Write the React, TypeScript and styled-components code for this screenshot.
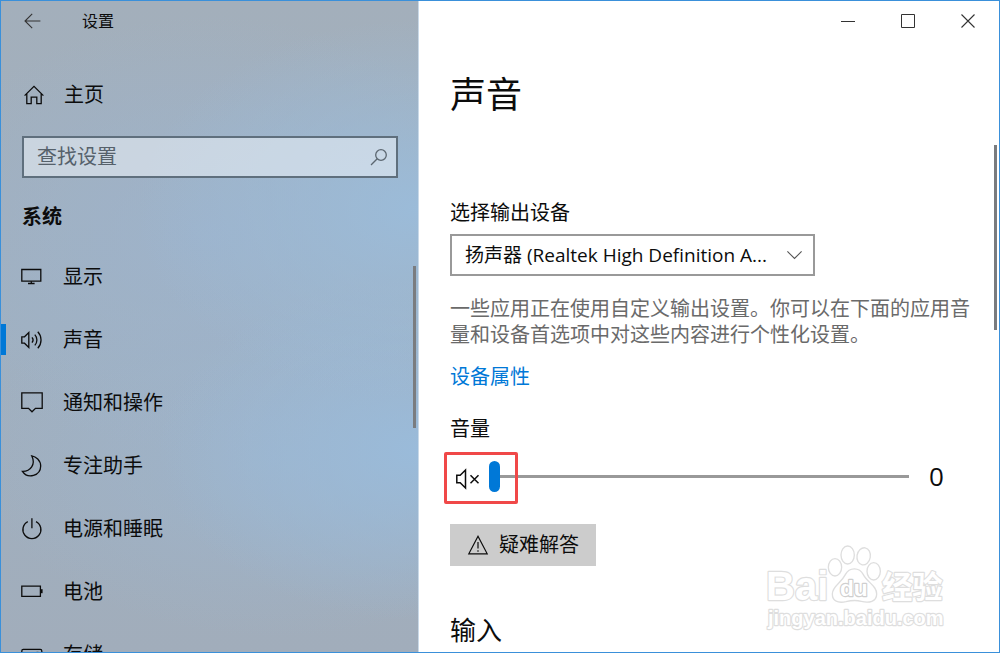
import React, { useState } from "react";
import styled, { createGlobalStyle } from "styled-components";

const GlobalStyle = createGlobalStyle`
  * { box-sizing: border-box; }
  body {
    margin: 0;
    color: #0c0c0c;
    font-family: "Open Sans", "Noto Sans CJK SC", sans-serif;
    font-size: 20px;
    line-height: 26px;
  }
  button, input, select { font: inherit; color: inherit; }
  h1, h2, p, ul { margin: 0; padding: 0; }
`;

const Window = styled.div`
  display: flex;
  height: 100vh;
  overflow: hidden;
  border: 1px solid #3a90da;
  background: #fff;
`;

const Sidebar = styled.aside`
  position: relative;
  flex: 0 0 418px;
  display: flex;
  flex-direction: column;
  overflow: hidden;
  border-right: 1px solid #c9d9e8;
  background:
    radial-gradient(ellipse 280px 190px at 100% 32%, rgba(155, 188, 218, 0.95), rgba(155, 188, 218, 0) 100%),
    radial-gradient(ellipse 260px 170px at 100% 69%, rgba(154, 187, 218, 1), rgba(154, 187, 218, 0) 100%),
    radial-gradient(ellipse 300px 220px at 50% 36%, rgba(157, 180, 206, 0.8), rgba(157, 180, 206, 0) 100%),
    radial-gradient(ellipse 300px 180px at 66% 70%, rgba(157, 181, 206, 0.8), rgba(157, 181, 206, 0) 100%),
    linear-gradient(#a3afbb, #a0b0c0 50%, #a1adbb);
`;

const Main = styled.main`
  position: relative;
  flex: 1;
  min-width: 0;
  display: flex;
  flex-direction: column;
  overflow: hidden;
`;

const TitleBar = styled.header<{ $end?: boolean }>`
  display: flex;
  flex: 0 0 40px;
  align-items: center;
  justify-content: ${(p) => (p.$end ? "flex-end" : "flex-start")};
  padding: 0 1px;
  font-size: 16px;
`;

const CaptionButton = styled.button`
  display: flex;
  align-items: center;
  justify-content: center;
  width: 60px;
  height: 40px;
  padding: 0;
  border: 0;
  background: none;
  color: #333;
`;

const WindowTitle = styled.span`
  margin-left: 20px;
`;

const SidebarBody = styled.div`
  display: flex;
  flex-direction: column;
  padding: 33px 20px 0 21px;
`;

const HomeLink = styled.a`
  display: flex;
  align-items: center;
  gap: 20px;
  height: 42px;
  color: inherit;
  text-decoration: none;
`;

const SearchBox = styled.label`
  display: flex;
  align-items: center;
  height: 42px;
  margin-top: 20px;
  padding: 0 8px 0 13px;
  border: 2px solid #5f6f7d;
  background: rgba(236, 242, 248, 0.55);
`;

const SearchInput = styled.input`
  flex: 1;
  min-width: 0;
  padding: 0;
  border: 0;
  outline: 0;
  background: none;
  &::placeholder { color: #56616b; opacity: 1; }
`;

const GroupTitle = styled.h2`
  margin-top: 26px;
  font-size: 20px;
  font-weight: 700;
`;

const NavList = styled.ul`
  margin-top: 15px;
  list-style: none;
`;

const NavLink = styled.a<{ $active?: boolean }>`
  display: flex;
  align-items: center;
  gap: 20px;
  height: 63px;
  padding-left: 20px;
  color: inherit;
  text-decoration: none;
  background: ${(p) =>
    p.$active ? "linear-gradient(#0078d7, #0078d7) left center / 5px 31px no-repeat" : "none"};
`;

const Glyph = styled.svg`
  flex: none;
  display: block;
  fill: none;
  stroke: currentColor;
  overflow: visible;
`;

const ScrollThumb = styled.div<{ $top: number; $length: number }>`
  position: absolute;
  top: ${(p) => p.$top}px;
  right: 2px;
  width: 3px;
  height: ${(p) => p.$length}px;
  background: #7a7c7f;
`;

const Content = styled.div`
  display: flex;
  flex-direction: column;
  align-items: flex-start;
  padding: 30px 19px 0 31px;
`;

const PageTitle = styled.h1`
  font-size: 36px;
  font-weight: 400;
  line-height: 48px;
`;

const FieldLabel = styled.label<{ $gap: number }>`
  margin-top: ${(p) => p.$gap}px;
`;

const SelectWrap = styled.div`
  display: grid;
  align-items: center;
  width: 365px;
  max-width: 100%;
  margin-top: 8px;
  > * { grid-area: 1 / 1; }
  > svg { justify-self: end; margin-right: 13px; pointer-events: none; }
`;

const DeviceSelect = styled.select`
  width: 100%;
  height: 42px;
  padding: 0 32px 0 13px;
  border: 2px solid #999;
  border-radius: 0;
  appearance: none;
  background: #fff;
  font-size: 19px;
`;

const Hint = styled.p`
  margin-top: 20px;
  color: #6a6a6a;
`;

const TextLink = styled.a`
  margin-top: 16px;
  color: #0078d7;
  text-decoration: none;
`;

const VolumeRow = styled.div`
  display: flex;
  align-items: center;
  align-self: stretch;
  height: 32px;
  margin-top: 18px;
  padding-right: 36px;
`;

const MuteArea = styled.div`
  position: relative;
  display: flex;
  align-items: center;
  width: 39px;
`;

const MuteButton = styled.button`
  display: flex;
  padding: 6px 6px 0;
  border: 0;
  background: none;
`;

const Highlight = styled.span`
  position: absolute;
  left: -6px;
  top: -11px;
  width: 74px;
  height: 52px;
  border: 3px solid #f04848;
  border-radius: 2px;
  pointer-events: none;
`;

const Slider = styled.input`
  flex: 1;
  min-width: 0;
  height: 32px;
  margin: 0;
  appearance: none;
  background: linear-gradient(#999, #999) center / 100% 3px no-repeat;
  &::-webkit-slider-thumb {
    appearance: none;
    width: 11px;
    height: 31px;
    border-radius: 6px;
    background: #0078d7;
  }
`;

const VolumeValue = styled.output`
  width: 35px;
  padding-left: 20px;
  font-size: 26px;
`;

const ActionButton = styled.button`
  display: flex;
  align-items: center;
  gap: 11px;
  height: 42px;
  margin-top: 32px;
  padding: 0 17px 0 18px;
  border: 0;
  background: #ccc;
`;

const SectionTitle = styled.h2`
  margin-top: 47px;
  font-size: 26px;
  font-weight: 400;
  line-height: 34px;
`;

const Watermark = styled.svg`
  position: absolute;
  right: 50px;
  bottom: 19px;
  width: 185px;
  height: 93px;
  fill: #fff;
  stroke: #dedede;
  stroke-width: 4px;
  font-family: "Liberation Sans", "Noto Sans CJK SC", sans-serif;
  font-weight: 700;
  pointer-events: none;
  text { stroke-width: 7px; paint-order: stroke; stroke-linejoin: round; }
`;

const icons: Record<string, React.ReactNode> = {
  display: (
    <>
      <path d="M.8 3.5h19v11.7H.8z" />
      <path d="M10.3 15.2v2.2M7 17.5h6.6" />
    </>
  ),
  sound: (
    <>
      <path d="M.8 7.8h2.7L7.8 3.5v15l-4.3-4.3H.8z" />
      <path d="M11 8.4a4 4 0 0 1 0 5.2M13.8 5.6a8 8 0 0 1 0 10.8M16.8 2.8a12 12 0 0 1 0 16.4" />
    </>
  ),
  notify: <path d="M.8 .8h20.4v15.6h-6.7L11 19.8l-3.5-3.4H.8z" />,
  focus: <path d="M10.7 .8C14.8 1.6 19.7 5 19.7 11A10 10 0 0 1 1.4 16.4C9.5 16.6 15 9.5 10.7 .8z" />,
  power: (
    <>
      <path d="M6.8 3.6a9 9 0 1 0 8.2 0" />
      <path d="M10.9 .3v10" />
    </>
  ),
  battery: (
    <>
      <path d="M.8 5.2h18.6v10.2H.8z" />
      <path d="M20.6 8.2v4" strokeWidth="2" />
    </>
  ),
  storage: (
    <>
      <rect x=".8" y="5.4" width="20" height="9" rx="1.5" />
      <path d="M15.5 8.5h2" />
    </>
  ),
};

const navItems = [
  ["display", "显示"],
  ["sound", "声音"],
  ["notify", "通知和操作"],
  ["focus", "专注助手"],
  ["power", "电源和睡眠"],
  ["battery", "电池"],
  ["storage", "存储"],
];

function Icon({ width = 22, height = 22, weight = 1.3, children }: {
  width?: number;
  height?: number;
  weight?: number;
  children: React.ReactNode;
}) {
  return (
    <Glyph width={width} height={height} viewBox={`0 0 ${width} ${height}`} strokeWidth={weight} aria-hidden="true">
      {children}
    </Glyph>
  );
}

function SettingsNav() {
  return (
    <Sidebar>
      <TitleBar>
        <CaptionButton aria-label="返回">
          <Icon width={18} height={16} weight={1.1}>
            <path d="M17.4 8H2.2M9.2 .8L2 8l7.2 7.2" />
          </Icon>
        </CaptionButton>
        <WindowTitle>设置</WindowTitle>
      </TitleBar>
      <SidebarBody>
        <HomeLink href="#home">
          <Icon width={22} height={20}>
            <path d="M2.6 10.6L12 1.4l9.4 9.2M4.8 8.6v10h4.4v-6.4h5.6v6.4h4.4v-10" />
          </Icon>
          主页
        </HomeLink>
        <SearchBox>
          <SearchInput type="text" placeholder="查找设置" aria-label="查找设置" />
          <Icon width={18} height={18}>
            <circle cx="11" cy="7" r="5.3" stroke="#5c6771" />
            <path d="M7.2 10.8L1 17" stroke="#5c6771" />
          </Icon>
        </SearchBox>
        <GroupTitle>系统</GroupTitle>
      </SidebarBody>
      <NavList>
        {navItems.map(([id, label]) => (
          <li key={id}>
            <NavLink href={`#${id}`} $active={id === "sound"}>
              <Icon>{icons[id]}</Icon>
              {label}
            </NavLink>
          </li>
        ))}
      </NavList>
      <ScrollThumb $top={265} $length={162} />
    </Sidebar>
  );
}

function BaiduWatermark() {
  return (
    <Watermark viewBox="40 30 555 279" aria-hidden="true">
      <ellipse cx="253" cy="112" rx="20" ry="26" />
      <ellipse cx="291" cy="75" rx="20" ry="27" />
      <ellipse cx="339" cy="79" rx="20" ry="26" transform="rotate(10 339 79)" />
      <ellipse cx="369" cy="124" rx="20" ry="26" />
      <path d="M245 192C245 168 270 162 284 134 296 111 326 111 338 134 350 158 378 166 378 192 378 215 355 220 332 214 316 210 302 211 286 215 262 220 245 214 245 192z" />
      <text x="46" y="211" fontSize="120">Bai</text>
      <text x="268" y="199" fontSize="68" stroke="#cfcfcf">du</text>
      <text x="394" y="204" fontSize="91">经验</text>
      <text x="52" y="284" fontSize="60">jingyan.baidu.com</text>
    </Watermark>
  );
}

export default function App() {
  const [volume, setVolume] = useState(0);
  return (
    <>
      <GlobalStyle />
      <Window>
        <SettingsNav />
        <Main>
          <TitleBar $end>
            <CaptionButton aria-label="最小化">
              <Icon width={14} height={14} weight={1}><path d="M0 7.5h14" /></Icon>
            </CaptionButton>
            <CaptionButton aria-label="最大化">
              <Icon width={14} height={14} weight={1}><path d="M.5 .5h13v13H.5z" /></Icon>
            </CaptionButton>
            <CaptionButton aria-label="关闭">
              <Icon width={14} height={14} weight={1.1}><path d="M.5 .5l13 13M13.5 .5l-13 13" /></Icon>
            </CaptionButton>
          </TitleBar>
          <Content>
            <PageTitle>声音</PageTitle>
            <FieldLabel htmlFor="device" $gap={81}>选择输出设备</FieldLabel>
            <SelectWrap>
              <DeviceSelect id="device">
                <option>扬声器 (Realtek High Definition A...</option>
              </DeviceSelect>
              <Icon width={15} height={8} weight={1.1}><path d="M.4 .4l7.1 7.1L14.6 .4" stroke="#555" /></Icon>
            </SelectWrap>
            <Hint>一些应用正在使用自定义输出设置。你可以在下面的应用音量和设备首选项中对这些内容进行个性化设置。</Hint>
            <TextLink href="#properties">设备属性</TextLink>
            <FieldLabel htmlFor="volume" $gap={26}>音量</FieldLabel>
            <VolumeRow>
              <MuteArea>
                <MuteButton aria-label="静音">
                  <Icon width={24} height={20} weight={1.5}>
                    <path d="M.8 6.2h3.4L9.5 1v18l-5.3-5.2H.8zM14.5 6.2l8 8M22.5 6.2l-8 8" />
                  </Icon>
                </MuteButton>
                <Highlight />
              </MuteArea>
              <Slider
                id="volume"
                type="range"
                min={0}
                max={100}
                value={volume}
                onChange={(e) => setVolume(Number(e.target.value))}
              />
              <VolumeValue htmlFor="volume">{volume}</VolumeValue>
            </VolumeRow>
            <ActionButton>
              <Icon width={20} height={20} weight={1.2}>
                <path d="M10 1.2L19.2 18.8H.8zM10 7v6.6M10 15.2v1.6" />
              </Icon>
              疑难解答
            </ActionButton>
            <SectionTitle>输入</SectionTitle>
          </Content>
          <ScrollThumb $top={144} $length={185} />
          <BaiduWatermark />
        </Main>
      </Window>
    </>
  );
}
